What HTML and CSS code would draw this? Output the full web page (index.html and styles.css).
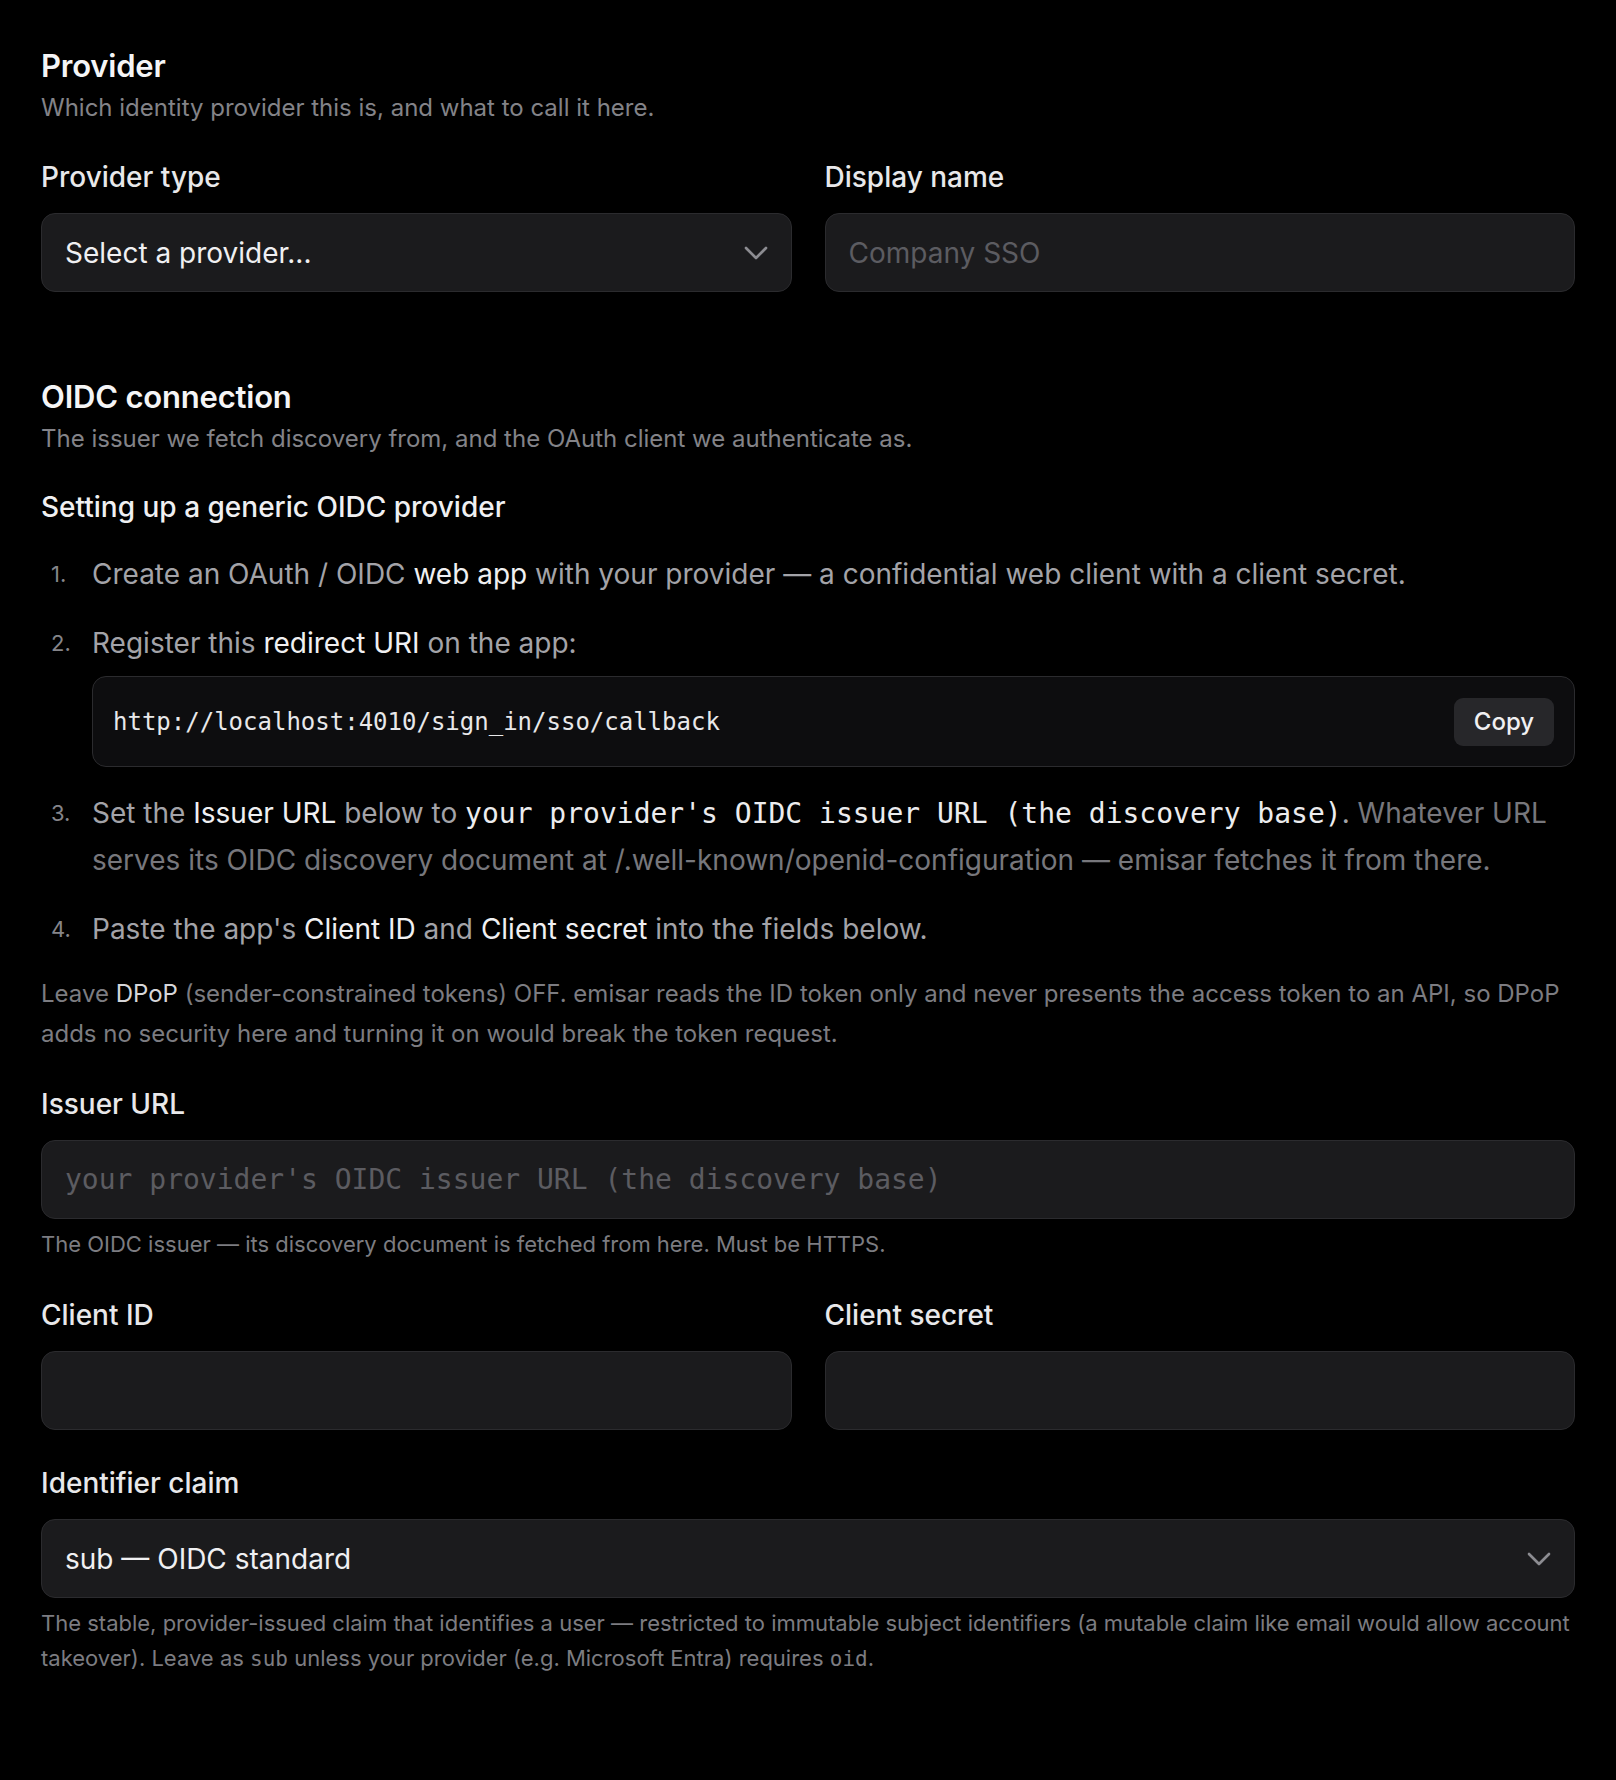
FILE: index.html
```html
<!DOCTYPE html>
<html lang="en">
<head>
  <meta charset="UTF-8">
  <meta name="viewport" content="width=device-width, initial-scale=1">
  <title>SSO provider</title>
  <link rel="stylesheet" href="styles.css">
</head>
<body>
  <form class="sso-form">

    <!-- Provider -->
    <section class="group">
      <h2 class="group-title">Provider</h2>
      <p class="group-desc">Which identity provider this is, and what to call it here.</p>

      <div class="row two-col">
        <div class="field">
          <label class="field-label" for="provider-type">Provider type</label>
          <div class="select-wrap">
            <select id="provider-type" class="control">
              <option>Select a provider...</option>
            </select>
            <svg class="chevron" viewBox="0 0 24 24" fill="none" stroke="currentColor" stroke-width="1.6" stroke-linecap="round" stroke-linejoin="round"><polyline points="6 9 12 15 18 9"/></svg>
          </div>
        </div>
        <div class="field">
          <label class="field-label" for="display-name">Display name</label>
          <input id="display-name" class="control" type="text" placeholder="Company SSO">
        </div>
      </div>
    </section>

    <!-- OIDC connection -->
    <section class="group">
      <h2 class="group-title">OIDC connection</h2>
      <p class="group-desc">The issuer we fetch discovery from, and the OAuth client we authenticate as.</p>

      <h3 class="guide-title">Setting up a generic OIDC provider</h3>
      <ol class="steps">
        <li>
          <span class="step-num">1.</span>
          <div class="step-body">Create an OAuth / OIDC <strong>web app</strong> with your provider — a confidential web client with a client secret.</div>
        </li>
        <li>
          <span class="step-num">2.</span>
          <div class="step-body">
            Register this <strong>redirect URI</strong> on the app:
            <div class="copy-box">
              <code>http://localhost:4010/sign_in/sso/callback</code>
              <button type="button" class="copy-btn">Copy</button>
            </div>
          </div>
        </li>
        <li>
          <span class="step-num">3.</span>
          <div class="step-body">Set the <strong>Issuer URL</strong> below to <code class="inline">your provider's OIDC issuer URL (the discovery base)</code>. <span class="muted">Whatever URL serves its OIDC discovery document at /.well-known/openid-configuration — emisar fetches it from there.</span></div>
        </li>
        <li>
          <span class="step-num">4.</span>
          <div class="step-body">Paste the app's <strong>Client ID</strong> and <strong>Client secret</strong> into the fields below.</div>
        </li>
      </ol>

      <p class="note">Leave <strong>DPoP</strong> (sender-constrained tokens) OFF. emisar reads the ID token only and never presents the access token to an API, so DPoP adds no security here and turning it on would break the token request.</p>

      <div class="row">
        <div class="field">
          <label class="field-label" for="issuer">Issuer URL</label>
          <input id="issuer" class="control mono" type="text" placeholder="your provider's OIDC issuer URL (the discovery base)">
          <p class="hint">The OIDC issuer — its discovery document is fetched from here. Must be HTTPS.</p>
        </div>
      </div>

      <div class="row two-col">
        <div class="field">
          <label class="field-label" for="client-id">Client ID</label>
          <input id="client-id" class="control" type="text">
        </div>
        <div class="field">
          <label class="field-label" for="client-secret">Client secret</label>
          <input id="client-secret" class="control" type="password">
        </div>
      </div>

      <div class="row">
        <div class="field">
          <label class="field-label" for="claim">Identifier claim</label>
          <div class="select-wrap">
            <select id="claim" class="control">
              <option>sub — OIDC standard</option>
            </select>
            <svg class="chevron" viewBox="0 0 24 24" fill="none" stroke="currentColor" stroke-width="1.6" stroke-linecap="round" stroke-linejoin="round"><polyline points="6 9 12 15 18 9"/></svg>
          </div>
          <p class="hint">The stable, provider-issued claim that identifies a user — restricted to immutable subject identifiers (a mutable claim like email would allow account takeover). Leave as <code>sub</code> unless your provider (e.g. Microsoft Entra) requires <code>oid</code>.</p>
        </div>
      </div>
    </section>

  </form>
</body>
</html>
```

FILE: styles.css
```css
/* Reset */
* {
  margin: 0;
  padding: 0;
  box-sizing: border-box;
}
body {
  font-family: 'Inter', 'Noto Sans', sans-serif;
  background: #000;
  color: #ececee;
  min-height: 100vh;
}
code {
  font-family: 'DejaVu Sans Mono', 'Liberation Mono', monospace;
}
.sso-form {
  padding: 46px 41px 80px;
}

/* Section headings */
.group + .group {
  margin-top: 85px;
}
.group-title {
  font-size: 31px;
  line-height: 40px;
  font-weight: 600;
  color: #f5f5f6;
  letter-spacing: -0.2px;
}
.group-desc {
  margin-top: 6px;
  font-size: 24px;
  line-height: 32px;
  color: #838388;
}

/* Fields */
.row {
  margin-top: 35px;
}
.two-col {
  display: grid;
  grid-template-columns: 1fr 1fr;
  gap: 33px;
}
.field {
  display: flex;
  flex-direction: column;
}
.field-label {
  font-size: 28px;
  line-height: 36px;
  font-weight: 500;
  color: #e8e8ea;
  margin-bottom: 18px;
}
.control {
  width: 100%;
  height: 79px;
  background: #1b1b1d;
  border: 1px solid #2b2b2e;
  border-radius: 14px;
  padding: 0 23px;
  font-family: 'Inter', 'Noto Sans', sans-serif;
  font-size: 28px;
  color: #f0f0f2;
  outline: none;
}
.control::placeholder {
  color: #5c5c61;
}
.control.mono {
  font-family: 'DejaVu Sans Mono', 'Liberation Mono', monospace;
  font-size: 28px;
}
select.control {
  appearance: none;
  -webkit-appearance: none;
  padding-right: 70px;
}
.select-wrap {
  position: relative;
}
.chevron {
  position: absolute;
  right: 16px;
  top: 50%;
  width: 40px;
  height: 40px;
  margin-top: -20px;
  color: #8c8c91;
  pointer-events: none;
}
.hint {
  margin-top: 8px;
  font-size: 22px;
  line-height: 35px;
  color: #7c7c81;
}
.hint code {
  font-size: 21px;
}

/* Setup guide */
.guide-title {
  margin-top: 34px;
  font-size: 28px;
  line-height: 36px;
  font-weight: 500;
  color: #f0f0f2;
}
.steps {
  list-style: none;
  margin-top: 26px;
}
.steps li {
  display: flex;
  font-size: 28px;
  line-height: 46px;
  color: #a3a3a8;
}
.steps li + li {
  margin-top: 23px;
}
.step-num {
  width: 51px;
  flex-shrink: 0;
  padding-left: 10px;
  font-size: 22px;
  color: #85858a;
}
.step-body {
  flex: 1;
}
.steps strong {
  font-weight: 400;
  color: #f0f0f2;
}
.steps .muted {
  color: #77777c;
}
code.inline {
  font-size: 28px;
  color: #ececee;
}
.copy-box {
  display: flex;
  align-items: center;
  justify-content: space-between;
  margin-top: 10px;
  height: 91px;
  padding: 0 20px 0 20px;
  background: #0d0d0f;
  border: 1px solid #2b2b2e;
  border-radius: 14px;
}
.copy-box code {
  font-size: 24px;
  color: #e8e8ea;
}
.copy-btn {
  width: 100px;
  height: 48px;
  border: none;
  border-radius: 9px;
  background: #27272a;
  color: #f0f0f2;
  font-family: 'Inter', 'Noto Sans', sans-serif;
  font-size: 24px;
  font-weight: 500;
  cursor: pointer;
}

/* DPoP note */
.note {
  margin-top: 22px;
  font-size: 24px;
  line-height: 40px;
  color: #7c7c81;
}
.note strong {
  font-weight: 400;
  color: #d6d6d9;
}
.note + .row {
  margin-top: 32px;
}
```
